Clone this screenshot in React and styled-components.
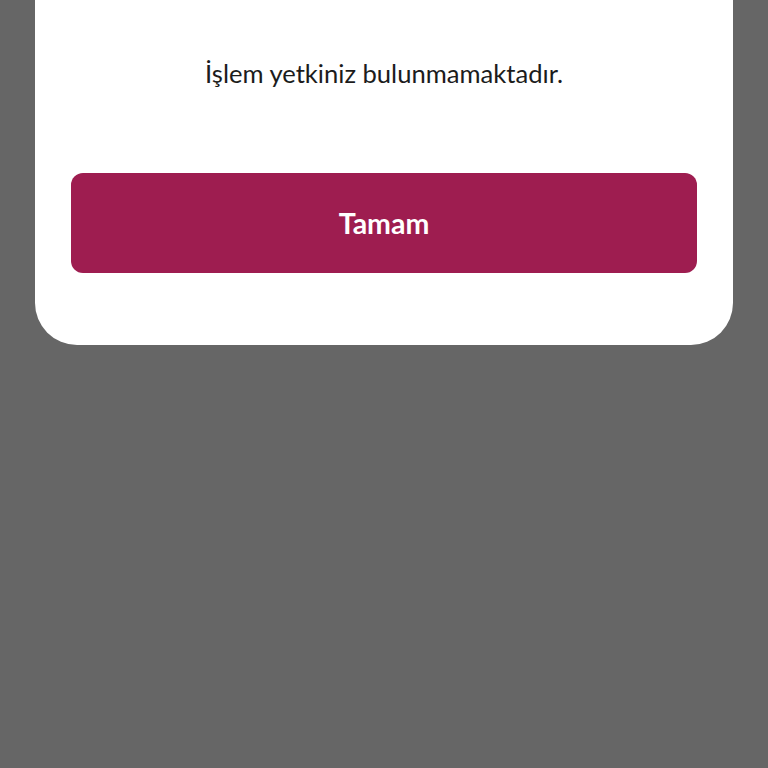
import React from "react";
import styled, { createGlobalStyle } from "styled-components";

const Global = createGlobalStyle`
  html, body {
    margin: 0;
    padding: 0;
    background: #666666;
    font-family: "Lato", "Noto Sans", sans-serif;
  }
`;

const Screen = styled.div`
  width: 768px;
  height: 768px;
  background: #666666;
  display: flex;
  justify-content: center;
  align-items: flex-start;
`;

const Sheet = styled.div`
  width: 698px;
  box-sizing: border-box;
  background: #ffffff;
  border-radius: 0 0 42px 42px;
  padding: 56px 36px 72px;
  display: flex;
  flex-direction: column;
  align-items: center;
`;

const Message = styled.p`
  margin: 0;
  font-size: 25.6px;
  line-height: 34px;
  color: #1c1c1c;
  text-align: center;
`;

const Button = styled.button`
  margin-top: 83px;
  width: 100%;
  height: 100px;
  border: none;
  border-radius: 12px;
  background: #9e1d50;
  color: #ffffff;
  font-family: inherit;
  font-size: 28.5px;
  font-weight: 700;
  cursor: pointer;
`;

export default function App() {
  return (
    <>
      <Global />
      <Screen>
        <Sheet>
          <Message>İşlem yetkiniz bulunmamaktadır.</Message>
          <Button>Tamam</Button>
        </Sheet>
      </Screen>
    </>
  );
}
